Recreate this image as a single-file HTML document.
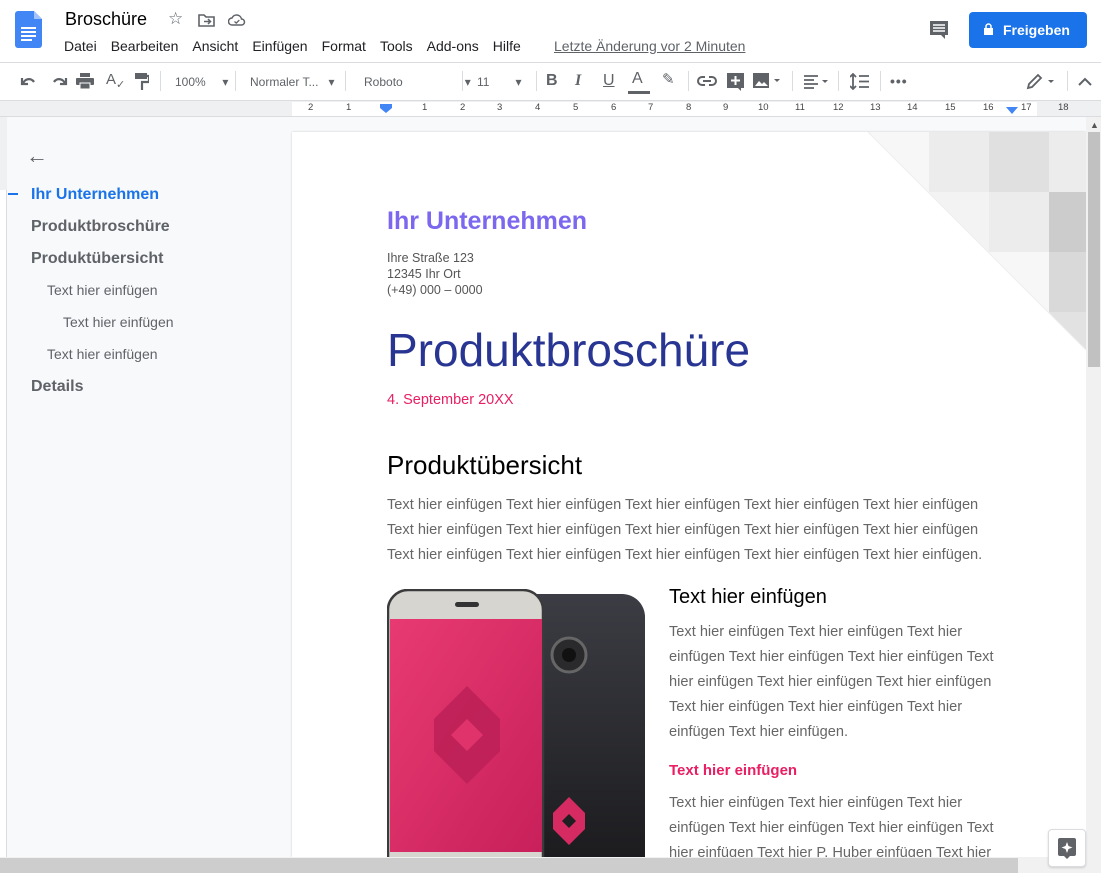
<!DOCTYPE html>
<html><head><meta charset="utf-8"><style>
*{margin:0;padding:0;box-sizing:border-box}
body{width:1101px;height:873px;overflow:hidden;background:#f8f9fa;font-family:"Liberation Sans",Arial,sans-serif;position:relative;color:#202124}
.a{position:absolute;white-space:nowrap}
.menu span{margin-right:14px}
.tb{color:#5f6368;font-size:12px}
.sep{position:absolute;top:71px;width:1px;height:20px;background:#dadce0}
.p{color:#666;font-size:14.6px;line-height:25px}
</style></head><body>
<!-- header -->
<div class="a" style="left:0;top:0;width:1101px;height:63px;background:#fff;border-bottom:1px solid #dadce0"></div>
<svg class="a" style="left:15px;top:11px" width="27" height="37"><path d="M0 3a3 3 0 0 1 3-3h16l8 8v26a3 3 0 0 1-3 3H3a3 3 0 0 1-3-3z" fill="#4285f4"/><path d="M19 0v8h8z" fill="#a1c2fa"/><rect x="6" y="16" width="15" height="2" fill="#fff"/><rect x="6" y="20" width="15" height="2" fill="#fff"/><rect x="6" y="24" width="15" height="2" fill="#fff"/><rect x="6" y="28" width="11" height="2" fill="#fff"/></svg>
<div class="a" style="left:65px;top:9px;font-size:18px;color:#000">Broschüre</div>
<div class="a" style="left:168px;top:9px;font-size:17px;color:#5f6368">☆</div>
<svg class="a" style="left:198px;top:13px" width="18" height="14"><path d="M1 2h5l2 2h8v9H1z" fill="none" stroke="#5f6368" stroke-width="1.6"/><path d="M6 8.5h6M10 6l2.5 2.5L10 11" stroke="#5f6368" stroke-width="1.5" fill="none"/></svg>
<svg class="a" style="left:228px;top:13px" width="18" height="14"><path d="M4 12a3.5 3.5 0 0 1 0-7 5 5 0 0 1 9.5 1 3 3 0 0 1 0 6z" fill="none" stroke="#5f6368" stroke-width="1.5"/><path d="M6.5 8.5l1.8 1.6 3-3" stroke="#5f6368" stroke-width="1.3" fill="none"/></svg>
<div class="a menu" style="left:64px;top:38px;font-size:14px;color:#202124"><span>Datei</span><span>Bearbeiten</span><span>Ansicht</span><span>Einfügen</span><span>Format</span><span>Tools</span><span>Add-ons</span><span>Hilfe</span></div>
<div class="a" style="left:554px;top:38px;font-size:14px;color:#5f6368;text-decoration:underline">Letzte Änderung vor 2 Minuten</div>
<svg class="a" style="left:929px;top:20px" width="20" height="20"><path d="M1 1h18v14h-3v4l-4-4H1z" fill="#5f6368"/><path d="M4 5h12M4 8h12M4 11h12" stroke="#fff" stroke-width="1.4"/></svg>
<div class="a" style="left:969px;top:12px;width:118px;height:36px;background:#1a73e8;border-radius:4px;color:#fff;font-size:14px;font-weight:bold;line-height:36px;padding-left:34px">Freigeben</div>
<svg class="a" style="left:983px;top:23px" width="11" height="13"><rect x="1" y="5" width="9" height="7" fill="#fff"/><path d="M3 5V3.5a2.5 2.5 0 0 1 5 0V5" stroke="#fff" stroke-width="1.5" fill="none"/></svg>
<!-- toolbar -->
<div class="a" style="left:0;top:63px;width:1101px;height:38px;background:#fff;border-bottom:1px solid #dadce0"></div>
<svg class="a" style="left:20px;top:75px" width="48" height="12"><path d="M3 9a6 6 0 0 1 11-2M2 3v6h6" stroke="#5f6368" stroke-width="2.2" fill="none"/><path d="M45 9a6 6 0 0 0-11-2M46 3v6h-6" stroke="#5f6368" stroke-width="2.2" fill="none"/></svg>
<svg class="a" style="left:76px;top:73px" width="18" height="16"><rect x="4" y="0" width="10" height="4" fill="#5f6368"/><rect x="0" y="5" width="18" height="7" rx="1" fill="#5f6368"/><rect x="4" y="10" width="10" height="6" fill="#5f6368" stroke="#fff" stroke-width="1"/></svg>
<div class="a tb" style="left:106px;top:71px;font-size:15px">A<sub style="font-size:11px">✓</sub></div>
<svg class="a" style="left:135px;top:73px" width="14" height="17"><rect x="0" y="0" width="12" height="6" fill="#5f6368"/><path d="M12 3h2v6H7v8" stroke="#5f6368" stroke-width="2.2" fill="none"/></svg>
<div class="sep" style="left:160px"></div>
<div class="a tb" style="left:175px;top:75px">100% &nbsp;&nbsp;&nbsp;&nbsp;▾</div>
<div class="sep" style="left:235px"></div>
<div class="a tb" style="left:250px;top:75px">Normaler T... &nbsp;&nbsp;▾</div>
<div class="sep" style="left:345px"></div>
<div class="a tb" style="left:364px;top:75px">Roboto<span style="margin-left:62px">▾</span></div>
<div class="sep" style="left:462px"></div>
<div class="a tb" style="left:477px;top:75px">11<span style="margin-left:26px">▾</span></div>
<div class="sep" style="left:536px"></div>
<div class="a" style="left:546px;top:72px;font-size:16px;font-weight:bold;color:#5f6368">B</div>
<div class="a" style="left:575px;top:72px;font-size:16px;font-style:italic;font-family:'Liberation Serif',serif;color:#5f6368;font-weight:bold">I</div>
<div class="a" style="left:603px;top:72px;font-size:16px;text-decoration:underline;color:#5f6368">U</div>
<div class="a" style="left:632px;top:70px;font-size:16px;color:#5f6368">A</div>
<div class="a" style="left:628px;top:91px;width:22px;height:3px;background:#5f6368"></div>
<div class="a" style="left:662px;top:70px;font-size:15px;color:#5f6368">✎</div>
<div class="sep" style="left:688px"></div>
<svg class="a" style="left:697px;top:76px" width="20" height="10"><path d="M8 1H5a4 4 0 0 0 0 8h3M12 1h3a4 4 0 0 1 0 8h-3M6 5h8" stroke="#5f6368" stroke-width="2" fill="none"/></svg>
<svg class="a" style="left:726px;top:72px" width="19" height="20"><path d="M1 1h17v15h-3v3l-3-3H1z" fill="#5f6368"/><path d="M9.5 4v9M5 8.5h9" stroke="#fff" stroke-width="2"/></svg>
<svg class="a" style="left:753px;top:73px" width="30" height="16"><rect x="0" y="0" width="16" height="15" fill="#5f6368"/><path d="M2 13l4-5 3 3 2-2 4 4z" fill="#fff"/><path d="M21 6l3 3 3-3z" fill="#5f6368"/></svg>
<div class="sep" style="left:792px"></div>
<svg class="a" style="left:804px;top:75px" width="28" height="14"><path d="M0 1h14M0 5h10M0 9h14M0 13h10" stroke="#5f6368" stroke-width="1.8"/><path d="M18 5l3 3 3-3z" fill="#5f6368"/></svg>
<div class="sep" style="left:838px"></div>
<svg class="a" style="left:850px;top:73px" width="20" height="17"><path d="M3 1v15M0 4l3-3 3 3M0 13l3 3 3-3M9 3h10M9 8.5h10M9 14h10" stroke="#5f6368" stroke-width="1.8" fill="none"/></svg>
<div class="sep" style="left:880px"></div>
<div class="a tb" style="left:890px;top:73px;font-size:14px;font-weight:bold;letter-spacing:1px">•••</div>
<svg class="a" style="left:1026px;top:74px" width="32" height="16"><path d="M2 14l1-4 9-9 3 3-9 9z" fill="none" stroke="#5f6368" stroke-width="1.8"/><path d="M22 6l3 3 3-3z" fill="#5f6368"/></svg>
<div class="sep" style="left:1067px"></div>
<svg class="a" style="left:1078px;top:77px" width="14" height="9"><path d="M1 8l6-6 6 6" stroke="#5f6368" stroke-width="2" fill="none"/></svg>
<!-- ruler -->
<div class="a" style="left:0;top:101px;width:1101px;height:16px;background:#eef0f2;border-bottom:1px solid #dadce0"></div>
<div class="a" style="left:292px;top:102px;width:745px;height:14px;background:#fff"></div>
<div class="a" style="left:300px;top:102px;font-size:9.5px;color:#444">
<span style="position:absolute;left:8px">2</span><span style="position:absolute;left:46px">1</span><span style="position:absolute;left:122px">1</span><span style="position:absolute;left:160px">2</span><span style="position:absolute;left:197px">3</span><span style="position:absolute;left:235px">4</span><span style="position:absolute;left:273px">5</span><span style="position:absolute;left:311px">6</span><span style="position:absolute;left:348px">7</span><span style="position:absolute;left:386px">8</span><span style="position:absolute;left:423px">9</span><span style="position:absolute;left:458px">10</span><span style="position:absolute;left:495px">11</span><span style="position:absolute;left:533px">12</span><span style="position:absolute;left:570px">13</span><span style="position:absolute;left:607px">14</span><span style="position:absolute;left:645px">15</span><span style="position:absolute;left:683px">16</span><span style="position:absolute;left:721px">17</span><span style="position:absolute;left:758px">18</span></div>
<svg class="a" style="left:379px;top:104px" width="14" height="10"><path d="M1 0h12v4l-6 5-6-5z" fill="#4285f4"/></svg>
<svg class="a" style="left:1005px;top:107px" width="14" height="8"><path d="M1 0h12l-6 7z" fill="#4285f4"/></svg>
<!-- left vertical ruler -->
<div class="a" style="left:0;top:117px;width:7px;height:740px;background:#fff;border-right:1px solid #dadce0"></div>
<div class="a" style="left:0;top:117px;width:7px;height:73px;background:#eef0f2"></div>
<!-- outline sidebar -->
<div class="a" style="left:26px;top:143px;font-size:22px;color:#5f6368">←</div>
<div class="a" style="left:8px;top:193px;width:10px;height:2px;background:#1a73e8"></div>
<div class="a" style="left:31px;top:186px;font-size:16px;font-weight:bold;color:#1a73e8">Ihr Unternehmen</div>
<div class="a" style="left:31px;top:218px;font-size:16px;font-weight:bold;color:#5f6368">Produktbroschüre</div>
<div class="a" style="left:31px;top:250px;font-size:16px;font-weight:bold;color:#5f6368">Produktübersicht</div>
<div class="a" style="left:47px;top:282px;font-size:14px;color:#5f6368">Text hier einfügen</div>
<div class="a" style="left:63px;top:314px;font-size:14px;color:#5f6368">Text hier einfügen</div>
<div class="a" style="left:47px;top:346px;font-size:14px;color:#5f6368">Text hier einfügen</div>
<div class="a" style="left:31px;top:378px;font-size:16px;font-weight:bold;color:#5f6368">Details</div>
<!-- page -->
<div class="a" style="left:292px;top:132px;width:794px;height:725px;background:#fff;box-shadow:0 0 2px rgba(0,0,0,.2);overflow:hidden">
<svg style="position:absolute;left:576px;top:0" width="218" height="218">
<path d="M0 0h218v218z" fill="#f7f7f7"/>
<rect x="61" y="0" width="60" height="60" fill="#ececec"/>
<rect x="121" y="0" width="60" height="60" fill="#e0e0e0"/>
<rect x="181" y="0" width="37" height="60" fill="#ececec"/>
<rect x="61" y="60" width="60" height="60" fill="#f3f3f3"/>
<rect x="121" y="60" width="60" height="60" fill="#ececec"/>
<rect x="181" y="60" width="37" height="60" fill="#cccccc"/>
<rect x="181" y="120" width="37" height="60" fill="#d9d9d9"/>
<rect x="181" y="180" width="37" height="38" fill="#e2e2e2"/>
<path d="M0 0L218 218V230H-10V0z" fill="#fff"/>
<path d="M0 0L218 218" stroke="#eee" stroke-width="1"/>
</svg>
</div>
<div class="a" style="left:387px;top:207px;font-size:25px;font-weight:bold;color:#7b68ee">Ihr Unternehmen</div>
<div class="a" style="left:387px;top:250px;font-size:12.5px;line-height:16px;color:#555">Ihre Straße 123<br>12345 Ihr Ort<br>(+49) 000 – 0000</div>
<div class="a" style="left:387px;top:323px;font-size:46px;color:#283593">Produktbroschüre</div>
<div class="a" style="left:387px;top:392px;font-size:14.5px;color:#e91e63">4. September 20XX</div>
<div class="a" style="left:387px;top:450px;font-size:26px;color:#000">Produktübersicht</div>
<div class="a p" style="left:387px;top:493px">Text hier einfügen Text hier einfügen Text hier einfügen Text hier einfügen Text hier einfügen<br>Text hier einfügen Text hier einfügen Text hier einfügen Text hier einfügen Text hier einfügen<br>Text hier einfügen Text hier einfügen Text hier einfügen Text hier einfügen Text hier einfügen.</div>
<div class="a" style="left:669px;top:586px;font-size:20px;color:#000">Text hier einfügen</div>
<div class="a p" style="left:669px;top:620px">Text hier einfügen Text hier einfügen Text hier<br>einfügen Text hier einfügen Text hier einfügen Text<br>hier einfügen Text hier einfügen Text hier einfügen<br>Text hier einfügen Text hier einfügen Text hier<br>einfügen Text hier einfügen.</div>
<div class="a" style="left:669px;top:762px;font-size:15px;font-weight:bold;color:#e91e63">Text hier einfügen</div>
<div class="a p" style="left:669px;top:791px">Text hier einfügen Text hier einfügen Text hier<br>einfügen Text hier einfügen Text hier einfügen Text<br>hier einfügen Text hier P. Huber einfügen Text hier</div>
<!-- phone -->
<svg class="a" style="left:387px;top:589px" width="260" height="270">
<defs><linearGradient id="g1" x1="0" y1="0" x2="0" y2="1"><stop offset="0" stop-color="#3c3d44"/><stop offset="1" stop-color="#1c1c1f"/></linearGradient>
<linearGradient id="g2" x1="0" y1="0" x2="1" y2="1"><stop offset="0" stop-color="#e83a72"/><stop offset="1" stop-color="#c8205a"/></linearGradient></defs>
<path d="M140 5h95a23 23 0 0 1 23 23v242H140z" fill="url(#g1)"/>
<circle cx="182" cy="66" r="17" fill="#2a2a2d" stroke="#666" stroke-width="3"/>
<circle cx="182" cy="66" r="7" fill="#111"/>
<path d="M182 208l16 16v16l-16 16-16-16v-16z" fill="#d52a62"/>
<path d="M182 225l7 7-7 7-7-7z" fill="#1f1f22"/>
<path d="M1 270V22A20 20 0 0 1 21 1h115a20 20 0 0 1 20 20v249z" fill="#d6d5cf" stroke="#3b3b3e" stroke-width="2.5"/>
<rect x="68" y="13" width="24" height="5" rx="2.5" fill="#333"/>
<rect x="3" y="30" width="152" height="233" fill="url(#g2)"/>
<path d="M80 97l33 33v32l-33 33-33-33v-32z" fill="#b91f55" opacity=".8"/>
<path d="M80 130l16 16-16 16-16-16z" fill="#e0336b"/>
</svg>
<!-- scrollbars -->
<div class="a" style="left:1086px;top:117px;width:15px;height:740px;background:#f1f1f1"></div>
<div class="a" style="left:1088px;top:132px;width:12px;height:235px;background:#c1c1c1"></div>
<div class="a" style="left:1090px;top:120px;font-size:9px;color:#555">▲</div>
<div class="a" style="left:0;top:857px;width:1101px;height:16px;background:#f1f1f1"></div>
<div class="a" style="left:0;top:858px;width:1018px;height:15px;background:#cdcdcd"></div>
<div class="a" style="left:1048px;top:829px;width:38px;height:38px;background:#fff;border:1px solid #dadce0;border-radius:4px;box-shadow:0 1px 2px rgba(0,0,0,.15)"></div>
<svg class="a" style="left:1057px;top:838px" width="20" height="22"><path d="M1 2a2 2 0 0 1 2-2h14a2 2 0 0 1 2 2v14a2 2 0 0 1-2 2h-4l-3 3-3-3H3a2 2 0 0 1-2-2z" fill="#5f6368"/><path d="M10 4l1.5 4 4 1.5-4 1.5L10 15l-1.5-4-4-1.5 4-1.5z" fill="#fff"/></svg>
</body></html>
